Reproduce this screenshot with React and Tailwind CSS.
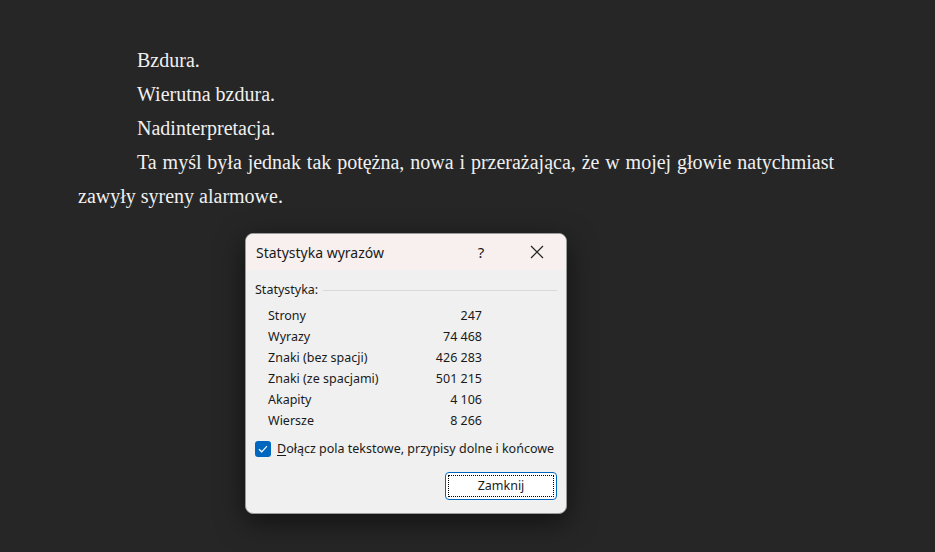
import React from "react";

const stats = [
  ["Strony", "247"],
  ["Wyrazy", "74 468"],
  ["Znaki (bez spacji)", "426 283"],
  ["Znaki (ze spacjami)", "501 215"],
  ["Akapity", "4 106"],
  ["Wiersze", "8 266"],
];

function WordCountDialog() {
  return (
    <div
      className="w-[322px] rounded-[8px] border border-[#9a9a9a] bg-[#f0f0f0] shadow-[0_8px_28px_rgba(0,0,0,0.55)] overflow-hidden text-[#1a1a1a]"
      style={{ fontFamily: '"Noto Sans", "Open Sans", sans-serif' }}
    >
      <div className="h-[36px] bg-[#f8f0ee] flex items-center pl-[10px]">
        <span className="text-[14px] flex-1">Statystyka wyrazów</span>
        <span className="w-[46px] text-center text-[15px] mr-[10px]">?</span>
        <span className="w-[46px] h-[36px] flex items-center justify-center mr-[6px]">
          <svg width="14" height="14" viewBox="0 0 14 14">
            <path d="M1 1 L13 13 M13 1 L1 13" stroke="#222" strokeWidth="1.2" fill="none" />
          </svg>
        </span>
      </div>
      <div className="px-[9px] pt-[11px] pb-[13px] text-[12.5px]">
        <div className="flex items-center gap-[5px] h-[18px]">
          <span>Statystyka:</span>
          <div className="flex-1 h-px bg-[#d9d9d9]" />
        </div>
        <div className="mt-[7px] pl-[13px] w-[227px]">
          {stats.map(([label, value]) => (
            <div key={label} className="flex justify-between h-[21px] items-center">
              <span>{label}</span>
              <span>{value}</span>
            </div>
          ))}
        </div>
        <div className="flex items-center gap-[6px] mt-[8px] h-[18px]">
          <span className="w-[16px] h-[16px] rounded-[3px] bg-[#0067c0] flex items-center justify-center">
            <svg width="10" height="8" viewBox="0 0 10 8">
              <path d="M1 4.2 L3.7 6.8 L9 1.2" stroke="#fff" strokeWidth="1.2" fill="none" />
            </svg>
          </span>
          <span>
            <span className="underline underline-offset-2">D</span>ołącz pola tekstowe, przypisy dolne i końcowe
          </span>
        </div>
        <div className="flex justify-end mt-[14px]">
          <button className="w-[112px] h-[28px] rounded-[4px] border border-[#0067c0] bg-white p-[2px]">
            <span className="flex w-full h-full items-center justify-center border border-dotted border-black text-[12.5px]">
              Zamknij
            </span>
          </button>
        </div>
      </div>
    </div>
  );
}

export default function App() {
  return (
    <div className="w-[935px] h-[552px] bg-[#262626] overflow-hidden">
      <div
        className="w-[756px] ml-[78px] pt-[43px] text-[20px] leading-[34px] text-[#f0f0f0] text-justify"
        style={{ fontFamily: '"Liberation Serif", "Times New Roman", serif' }}
      >
        <p className="indent-[59px]">Bzdura.</p>
        <p className="indent-[59px]">Wierutna bzdura.</p>
        <p className="indent-[59px]">Nadinterpretacja.</p>
        <p className="indent-[59px]">
          Ta myśl była jednak tak potężna, nowa i przerażająca, że w mojej głowie natychmiast zawyły syreny alarmowe.
        </p>
      </div>
      <div className="ml-[245px] mt-[20px]">
        <WordCountDialog />
      </div>
    </div>
  );
}
